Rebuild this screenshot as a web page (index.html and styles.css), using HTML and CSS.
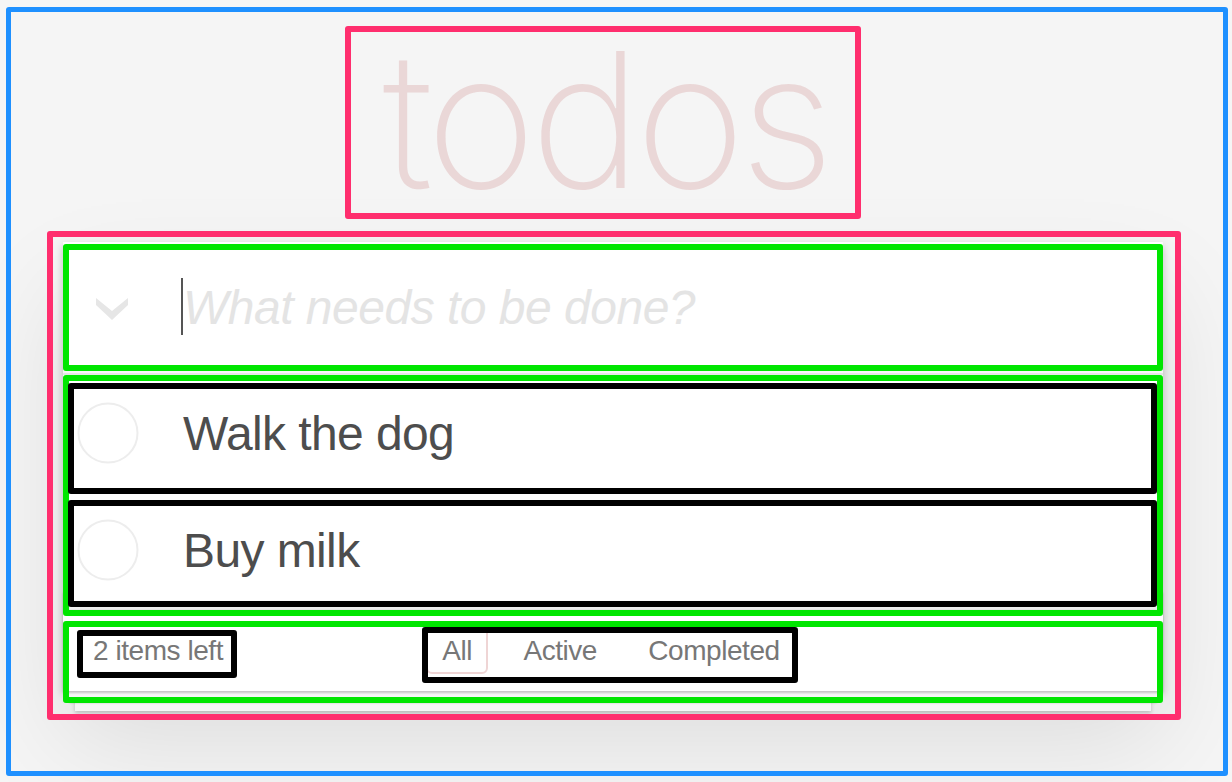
FILE: index.html
```html
<!DOCTYPE html>
<html lang="en">
<head>
<meta charset="utf-8">
<title>todos</title>
<link rel="stylesheet" href="styles.css">
</head>
<body>
<div class="page">
  <h1 class="title">todos</h1>
  <section class="todoapp">
    <header class="header">
      <div class="toggle-all">
        <svg width="32" height="22" viewBox="0 0 32 22"><polygon points="0,0 16,13 32,0 32,7 16,22 0,7" fill="#e6e6e6"/></svg>
      </div>
      <div class="new-todo"><span class="caret"></span>What needs to be done?</div>
    </header>
    <ul class="todo-list">
      <li class="todo">
        <div class="toggle"><svg width="62" height="62" viewBox="0 0 62 62"><circle cx="31" cy="31" r="29.5" fill="none" stroke="#ededed" stroke-width="2"/></svg></div>
        <label class="todo-label">Walk the dog</label>
      </li>
      <li class="todo">
        <div class="toggle"><svg width="62" height="62" viewBox="0 0 62 62"><circle cx="31" cy="31" r="29.5" fill="none" stroke="#ededed" stroke-width="2"/></svg></div>
        <label class="todo-label">Buy milk</label>
      </li>
    </ul>
    <footer class="footer">
      <span class="todo-count">2 items left</span>
      <ul class="filters">
        <li><a class="filter selected">All</a></li>
        <li><a class="filter">Active</a></li>
        <li><a class="filter">Completed</a></li>
      </ul>
      <span class="spacer"></span>
    </footer>
  </section>
</div>
<div class="annotations">
  <div class="box blue b-page"></div>
  <div class="box pink b-title"></div>
  <div class="box pink b-app"></div>
  <div class="box green b-input"></div>
  <div class="box green b-list"></div>
  <div class="box black b-item1"></div>
  <div class="box black b-item2"></div>
  <div class="box green b-footer"></div>
  <div class="box black b-count"></div>
  <div class="box black b-filters"></div>
</div>
</body>
</html>
```

FILE: styles.css
```css
html, body {
  margin: 0;
  padding: 0;
}
body {
  background: #f5f5f5;
  font-family: "Liberation Sans", Arial, sans-serif;
  color: #4d4d4d;
  width: 1232px;
  height: 782px;
  overflow: hidden;
  position: relative;
}
.page {
  width: 1100px;
  margin-left: 63px;
}
.title {
  margin: 0;
  box-sizing: border-box;
  height: 242px;
  padding-top: 26px;
  padding-right: 15px;
  font-family: Inter, "Liberation Sans", sans-serif;
  font-weight: 200;
  font-size: 188px;
  line-height: 188px;
  letter-spacing: -6px;
  text-align: center;
  color: rgba(175, 47, 47, 0.15);
}
.todoapp {
  background: #fff;
  position: relative;
  box-shadow: 0 4px 8px 0 rgba(0, 0, 0, 0.2), 0 50px 100px 0 rgba(0, 0, 0, 0.1);
}
.header {
  display: flex;
  align-items: center;
  height: 131px;
  box-shadow: inset 0 -4px 2px rgba(0, 0, 0, 0.03);
}
.toggle-all {
  width: 120px;
  box-sizing: border-box;
  padding-left: 33px;
  padding-top: 3px;
  display: flex;
}
.new-todo {
  flex: 1;
  font-size: 48px;
  line-height: 67.2px;
  font-style: italic;
  letter-spacing: -0.5px;
  color: #e4e4e4;
  padding-top: 1px;
}
.caret {
  display: inline-block;
  width: 2px;
  height: 57px;
  background: #555;
  vertical-align: -11px;
  margin-left: -2px;
}
.todo-list {
  margin: 0;
  padding: 0;
  list-style: none;
  border-top: 2px solid #e6e6e6;
}
.todo {
  display: flex;
  align-items: center;
  height: 115px;
  border-bottom: 2px solid #ededed;
}
.toggle {
  width: 120px;
  box-sizing: border-box;
  padding-left: 14px;
  display: flex;
}
.todo-label {
  font-size: 48px;
  line-height: 57.6px;
  letter-spacing: -0.6px;
  padding-top: 2px;
  color: #4d4d4d;
}
.footer {
  position: relative;
  display: grid;
  grid-template-columns: 1fr auto 1fr;
  height: 40px;
  padding: 20px 30px;
  border-top: 2px solid #e6e6e6;
  font-size: 28px;
  line-height: 39.2px;
  letter-spacing: -0.45px;
  color: #777;
}
.footer::before {
  content: "";
  position: absolute;
  left: 0;
  right: 0;
  bottom: 0;
  height: 100px;
  overflow: hidden;
  box-shadow: 0 2px 2px rgba(0, 0, 0, 0.2),
    0 16px 0 -6px #f6f6f6,
    0 18px 2px -6px rgba(0, 0, 0, 0.2),
    0 32px 0 -12px #f6f6f6,
    0 34px 4px -12px rgba(0, 0, 0, 0.2);
}
.todo-count {
  text-align: left;
}
.filters {
  margin: 0 4px 0 0;
  padding: 0;
  list-style: none;
  white-space: nowrap;
}
.filters li {
  display: inline;
}
.filter {
  color: #777;
  margin: 6px;
  padding: 6px 14px;
  border: 2px solid transparent;
  border-radius: 6px;
}
.filter.selected {
  border-color: rgba(175, 47, 47, 0.2);
}

/* annotation overlay */
.annotations {
  position: absolute;
  left: 0;
  top: 0;
  width: 1232px;
  height: 782px;
  pointer-events: none;
}
.box {
  position: absolute;
  box-sizing: border-box;
  border: 6px solid;
  border-radius: 3px;
}
.blue { border-color: #1e90ff; border-width: 5px; }
.pink { border-color: #ff2e6e; }
.green { border-color: #00e600; }
.black { border-color: #000; }
.b-page { left: 6px; top: 7px; width: 1222px; height: 769px; }
.b-title { left: 345px; top: 26px; width: 516px; height: 193px; }
.b-app { left: 47px; top: 231px; width: 1134px; height: 489px; }
.b-input { left: 63px; top: 244px; width: 1100px; height: 127px; }
.b-list { left: 63px; top: 375px; width: 1100px; height: 241px; }
.b-item1 { left: 68px; top: 383px; width: 1089px; height: 111px; }
.b-item2 { left: 68px; top: 500px; width: 1089px; height: 107px; }
.b-footer { left: 63px; top: 621px; width: 1100px; height: 82px; }
.b-count { left: 77px; top: 630px; width: 160px; height: 48px; }
.b-filters { left: 422px; top: 627px; width: 376px; height: 56px; }
```
